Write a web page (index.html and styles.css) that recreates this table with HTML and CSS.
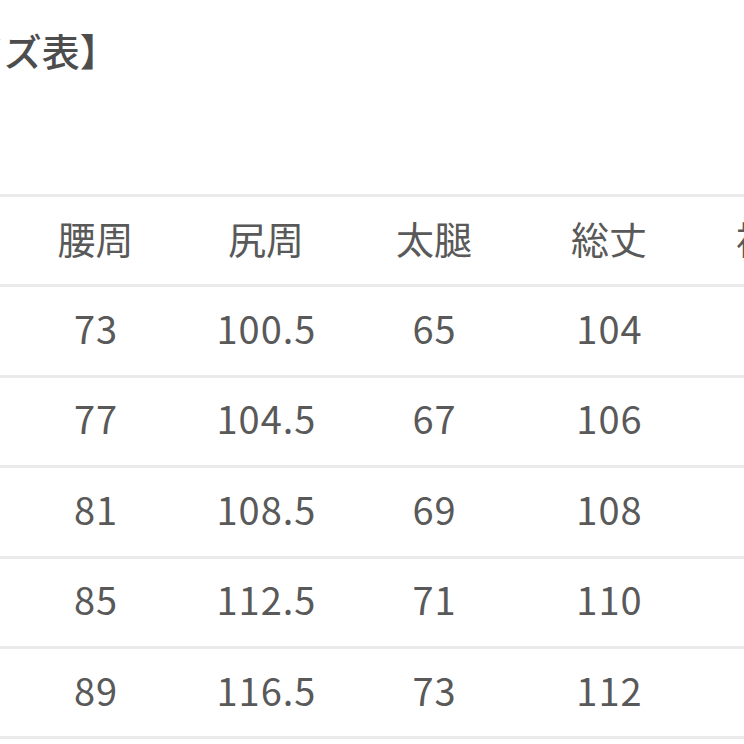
FILE: index.html
```html
<!DOCTYPE html>
<html lang="ja">
<head>
<meta charset="utf-8">
<title>サイズ表</title>
<link rel="stylesheet" href="styles.css">
</head>
<body>
<div class="page">
  <div class="title">【サイズ表】</div>
  <div class="table">
    <div class="row head">
      <div class="cell">腰周</div><div class="cell">尻周</div><div class="cell">太腿</div><div class="cell">総丈</div><div class="cell">裾幅</div>
    </div>
    <div class="row">
      <div class="cell num">73</div><div class="cell num">100.5</div><div class="cell num">65</div><div class="cell num">104</div><div class="cell num">21</div>
    </div>
    <div class="row">
      <div class="cell num">77</div><div class="cell num">104.5</div><div class="cell num">67</div><div class="cell num">106</div><div class="cell num">22</div>
    </div>
    <div class="row">
      <div class="cell num">81</div><div class="cell num">108.5</div><div class="cell num">69</div><div class="cell num">108</div><div class="cell num">23</div>
    </div>
    <div class="row">
      <div class="cell num">85</div><div class="cell num">112.5</div><div class="cell num">71</div><div class="cell num">110</div><div class="cell num">24</div>
    </div>
    <div class="row last">
      <div class="cell num">89</div><div class="cell num">116.5</div><div class="cell num">73</div><div class="cell num">112</div><div class="cell num">25</div>
    </div>
  </div>
</div>
</body>
</html>
```
FILE: styles.css
```css
html, body {
  margin: 0;
  padding: 0;
  background: #ffffff;
}
body {
  width: 744px;
  height: 744px;
  overflow: hidden;
  font-family: "Noto Sans CJK JP", "Noto Sans", sans-serif;
  color: #595959;
}
.page {
  padding-top: 31px;
}
.title {
  font-size: 38px;
  line-height: 38px;
  height: 38px;
  margin-left: -109px;
  white-space: nowrap;
  color: #4d4d4d;
  font-weight: 500;
}
.table {
  margin-top: 125px;
  width: 744px;
  overflow: hidden;
}
.row {
  display: grid;
  grid-template-columns: 171px 170px 166px 184px 146px;
  padding-left: 10px;
  height: 87.4px;
  border-top: 3px solid #eaeaea;
  align-items: center;
}
.row.last {
  border-bottom: 3px solid #eaeaea;
}
.cell {
  text-align: center;
  font-size: 38px;
  line-height: 38px;
  white-space: nowrap;
  margin-top: -6px;
}
.cell.num {
  letter-spacing: 1px;
  padding-left: 1px;
}
```
